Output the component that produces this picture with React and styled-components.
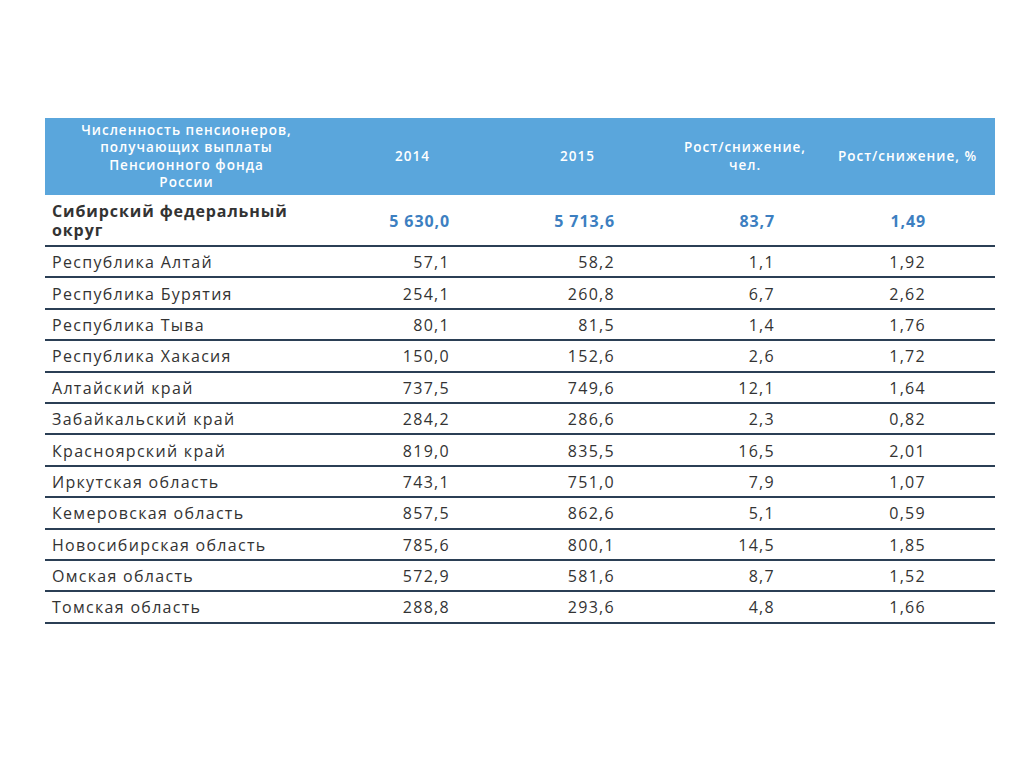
import React from 'react';
import styled, { createGlobalStyle } from 'styled-components';

const GlobalStyle = createGlobalStyle`
    html, body {
        margin: 0;
        padding: 0;
        background: #ffffff;
    }
    body {
        font-family: "Open Sans", "Noto Sans", sans-serif;
    }
`

const Page = styled.div`
    width: 1024px;
    height: 767px;
    padding: 118px 29px 0 45px;
    box-sizing: border-box;
`

const Grid = styled.div`
    display: grid;
    grid-template-columns: 295px 145px 185px 150px 175px;
    width: 950px;
`

const HeadCell = styled.div`
    background-color: #5aa6dc;
    color: #ffffff;
    height: 77px;
    display: flex;
    align-items: center;
    justify-content: center;
    text-align: center;
    font-size: 13.5px;
    letter-spacing: 1px;
    font-weight: 600;
    line-height: 17.5px;
    padding: 0 ${props => props.padR || '2px'} 0 2px;
    box-sizing: border-box;
    white-space: nowrap;
`

const Cell = styled.div`
    height: ${props => props.tall ? '52px' : '31.4px'};
    box-sizing: border-box;
    border-bottom: 2px solid #2b3f55;
    display: flex;
    align-items: center;
    padding-top: 2px;
    font-size: 16px;
    letter-spacing: ${props => props.bold ? '0.9px' : '1.3px'};
    color: ${props => props.accent ? '#3d7fc1' : '#333'};
    font-weight: ${props => props.bold ? 700 : 400};
    justify-content: ${props => props.name ? 'flex-start' : 'flex-end'};
    padding-left: ${props => props.name ? '7px' : '0'};
    padding-right: ${props => props.padR || '0'};
    line-height: 19px;
    white-space: nowrap;
`

const NameText = styled.span`
    white-space: normal;
    max-width: 250px;
`

const pads = ['35px', '55px', '45px', '69px'];

const rows = [
    ['Республика Алтай', '57,1', '58,2', '1,1', '1,92'],
    ['Республика Бурятия', '254,1', '260,8', '6,7', '2,62'],
    ['Республика Тыва', '80,1', '81,5', '1,4', '1,76'],
    ['Республика Хакасия', '150,0', '152,6', '2,6', '1,72'],
    ['Алтайский край', '737,5', '749,6', '12,1', '1,64'],
    ['Забайкальский край', '284,2', '286,6', '2,3', '0,82'],
    ['Красноярский край', '819,0', '835,5', '16,5', '2,01'],
    ['Иркутская область', '743,1', '751,0', '7,9', '1,07'],
    ['Кемеровская область', '857,5', '862,6', '5,1', '0,59'],
    ['Новосибирская область', '785,6', '800,1', '14,5', '1,85'],
    ['Омская область', '572,9', '581,6', '8,7', '1,52'],
    ['Томская область', '288,8', '293,6', '4,8', '1,66'],
];

const App = () => {
    return (
        <>
            <GlobalStyle />
            <Page>
                <Grid>
                    <HeadCell padR="14px">
                        Численность пенсионеров,<br />
                        получающих выплаты<br />
                        Пенсионного фонда<br />
                        России
                    </HeadCell>
                    <HeadCell>2014</HeadCell>
                    <HeadCell>2015</HeadCell>
                    <HeadCell>Рост/снижение,<br />чел.</HeadCell>
                    <HeadCell>Рост/снижение, %</HeadCell>

                    <Cell tall name bold>
                        <NameText>Сибирский федеральный округ</NameText>
                    </Cell>
                    <Cell tall bold accent padR={pads[0]}>5 630,0</Cell>
                    <Cell tall bold accent padR={pads[1]}>5 713,6</Cell>
                    <Cell tall bold accent padR={pads[2]}>83,7</Cell>
                    <Cell tall bold accent padR={pads[3]}>1,49</Cell>

                    {rows.map(row => (
                        <React.Fragment key={row[0]}>
                            <Cell name>{row[0]}</Cell>
                            {row.slice(1).map((v, i) => (
                                <Cell key={i} padR={pads[i]}>{v}</Cell>
                            ))}
                        </React.Fragment>
                    ))}
                </Grid>
            </Page>
        </>
    )
}

export default App;
